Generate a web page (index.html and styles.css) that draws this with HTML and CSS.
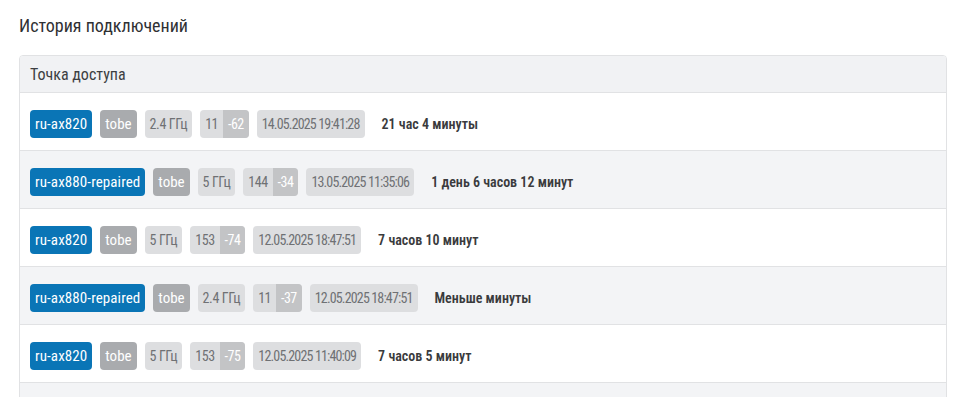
FILE: index.html
```html
<!DOCTYPE html>
<html lang="ru">
<head>
<meta charset="utf-8">
<title>История подключений</title>
<link rel="stylesheet" href="styles.css">
</head>
<body>
<div class="page">
  <h2 class="title">История подключений</h2>
  <div class="panel">
    <div class="panel-head">Точка доступа</div>
    <div class="row">
      <span class="badge ap">ru-ax820</span>
      <span class="badge ssid">tobe</span>
      <span class="badge soft">2.4 ГГц</span>
      <span class="badge split"><span class="ch">11</span><span class="sig">-62</span></span>
      <span class="badge soft date">14.05.2025 19:41:28</span>
      <span class="dur">21 час 4 минуты</span>
    </div>
    <div class="row alt">
      <span class="badge ap">ru-ax880-repaired</span>
      <span class="badge ssid">tobe</span>
      <span class="badge soft">5 ГГц</span>
      <span class="badge split"><span class="ch">144</span><span class="sig">-34</span></span>
      <span class="badge soft date">13.05.2025 11:35:06</span>
      <span class="dur">1 день 6 часов 12 минут</span>
    </div>
    <div class="row">
      <span class="badge ap">ru-ax820</span>
      <span class="badge ssid">tobe</span>
      <span class="badge soft">5 ГГц</span>
      <span class="badge split"><span class="ch">153</span><span class="sig">-74</span></span>
      <span class="badge soft date">12.05.2025 18:47:51</span>
      <span class="dur">7 часов 10 минут</span>
    </div>
    <div class="row alt">
      <span class="badge ap">ru-ax880-repaired</span>
      <span class="badge ssid">tobe</span>
      <span class="badge soft">2.4 ГГц</span>
      <span class="badge split"><span class="ch">11</span><span class="sig">-37</span></span>
      <span class="badge soft date">12.05.2025 18:47:51</span>
      <span class="dur">Меньше минуты</span>
    </div>
    <div class="row">
      <span class="badge ap">ru-ax820</span>
      <span class="badge ssid">tobe</span>
      <span class="badge soft">5 ГГц</span>
      <span class="badge split"><span class="ch">153</span><span class="sig">-75</span></span>
      <span class="badge soft date">12.05.2025 11:40:09</span>
      <span class="dur">7 часов 5 минут</span>
    </div>
    <div class="row alt empty"></div>
  </div>
</div>
</body>
</html>
```

FILE: styles.css
```css
html, body {
  margin: 0;
  padding: 0;
  background: #ffffff;
}
body {
  font-family: "Roboto Condensed", "Open Sans", "DejaVu Sans Condensed", sans-serif;
  font-stretch: 75%;
  color: #333333;
}
.page {
  padding: 14px 15px 0 19px;
}
.title {
  margin: 0 0 18px 0;
  font-size: 18px;
  line-height: 23px;
  font-weight: normal;
  color: #2f3033;
}
.panel {
  border: 1px solid #e1e2e4;
  border-radius: 4px;
  overflow: hidden;
}
.panel-head {
  background: #f1f2f4;
  border-bottom: 1px solid #e1e2e4;
  padding: 0 10px;
  height: 36px;
  line-height: 37px;
  font-size: 16px;
  color: #3d3f42;
}
.row {
  display: flex;
  align-items: center;
  gap: 8px;
  padding: 17px 10px 12px 10px;
  border-bottom: 1px solid #e1e2e4;
  background: #ffffff;
}
.row.alt {
  background: #f3f4f6;
}
.row.empty {
  height: 28px;
}
.badge {
  display: inline-flex;
  align-items: center;
  height: 28px;
  padding: 0 5px;
  border-radius: 4px;
  font-size: 15px;
  line-height: 28px;
  white-space: nowrap;
}
.ap {
  background: #0a75b6;
  color: #ffffff;
  letter-spacing: 0.1px;
}
.ssid {
  background: #a9abae;
  color: #ffffff;
}
.soft {
  background: #dddee0;
  color: #6f7174;
  font-size: 14px;
  letter-spacing: -0.4px;
}
.date {
  letter-spacing: -0.85px;
}
.split {
  padding: 0;
  overflow: hidden;
  background: #dddee0;
  font-size: 14px;
  letter-spacing: -0.5px;
}
.ch {
  padding: 0 5px;
  color: #6f7174;
}
.sig {
  padding: 0 5px;
  background: #c3c4c6;
  color: #ffffff;
  height: 28px;
}
.dur {
  margin-left: 9px;
  font-size: 14px;
  font-weight: 600;
  color: #3a3b3d;
}
```
